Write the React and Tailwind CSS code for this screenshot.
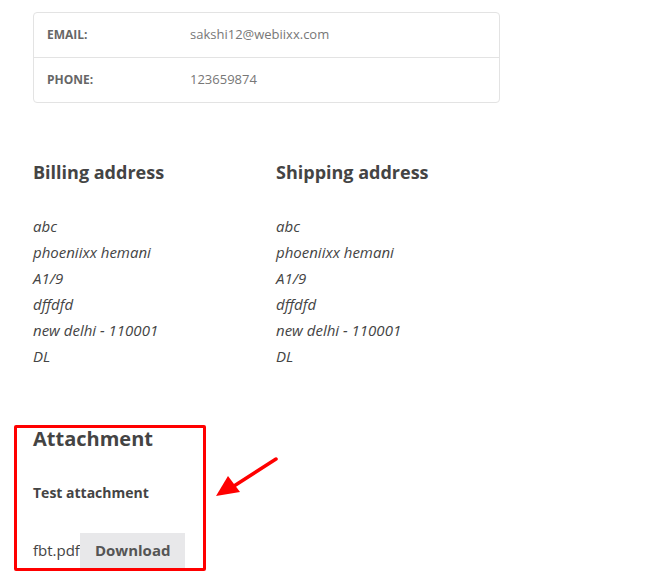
import React from 'react';

const address = ['abc', 'phoeniixx hemani', 'A1/9', 'dffdfd', 'new delhi - 110001', 'DL'];

const AddressBlock = ({ title }) => (
    <div className="w-[243px]">
        <h3 className="text-[18px] leading-[24px] font-bold text-[#444]">{title}</h3>
        <div className="mt-[29px]">
            {address.map((line, i) => (
                <p key={i} className="text-[15px] leading-[26px] italic text-[#444]">{line}</p>
            ))}
        </div>
    </div>
);

const App = () => {
    return (
        <div className="relative w-[652px] h-[571px] bg-white overflow-hidden" style={{ fontFamily: '"Open Sans", sans-serif' }}>
            <div className="pl-[33px] pt-[12px]">
                <div className="w-[467px] border border-[#e3e3e3] rounded-[4px]">
                    <div className="flex items-center h-[45px] border-b border-[#e3e3e3] px-[13px]">
                        <span className="w-[143px] text-[12px] font-bold text-[#666] uppercase">Email:</span>
                        <span className="text-[13px] text-[#777]">sakshi12@webiixx.com</span>
                    </div>
                    <div className="flex items-center h-[44px] px-[13px]">
                        <span className="w-[143px] text-[12px] font-bold text-[#666] uppercase">Phone:</span>
                        <span className="text-[13px] text-[#777]">123659874</span>
                    </div>
                </div>

                <div className="flex mt-[57px]">
                    <AddressBlock title="Billing address" />
                    <AddressBlock title="Shipping address" />
                </div>

                <h2 className="mt-[57px] text-[20px] leading-[26px] font-bold text-[#444]">Attachment</h2>
                <p className="mt-[31px] text-[14px] leading-[20px] font-bold text-[#444]">Test attachment</p>
                <div className="mt-[30px] flex items-center">
                    <span className="text-[15px] text-[#444]">fbt.pdf</span>
                    <button className="h-[35px] px-[15px] bg-[#e8e8ea] text-[15px] font-bold text-[#555]">Download</button>
                </div>
            </div>

            {/* annotation overlay */}
            <div className="absolute left-[14px] top-[425px] w-[192px] h-[146px] border-[3px] border-[#f00] rounded-[2px]"></div>
            <svg className="absolute left-[210px] top-[450px]" width="72" height="52" viewBox="0 0 72 52">
                <line x1="66" y1="9" x2="24" y2="36" stroke="#f00" strokeWidth="3.5" strokeLinecap="round" />
                <polygon points="6,46 18,26 30,42" fill="#f00" />
            </svg>
        </div>
    );
};

export default App;
